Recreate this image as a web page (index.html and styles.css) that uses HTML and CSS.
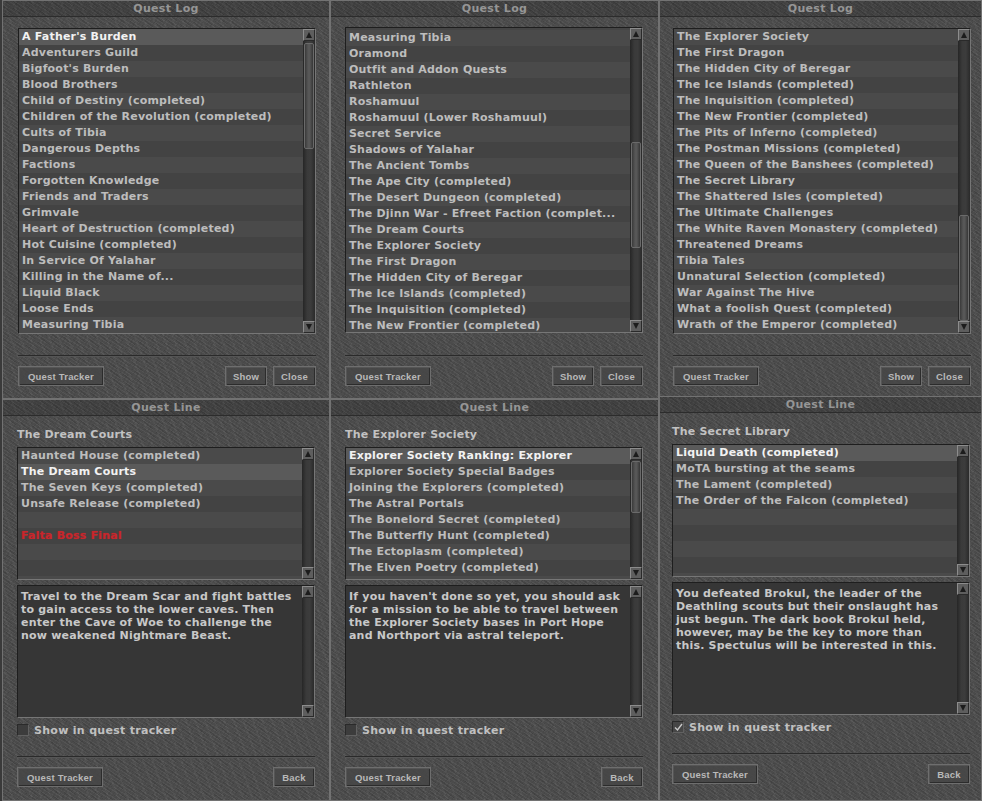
FILE: index.html
```html
<!DOCTYPE html>
<html>
<head>
<meta charset="utf-8">
<link rel="stylesheet" href="styles.css">
</head>
<body>
<div class="grid">

  <!-- Top left -->
  <section class="panel p1">
    <div class="title">Quest Log</div>
    <div class="body pad-15 top">
      <div class="list tall">
        <div class="rows">
          <div class="row sel">A Father's Burden</div>
          <div class="row">Adventurers Guild</div>
          <div class="row">Bigfoot's Burden</div>
          <div class="row">Blood Brothers</div>
          <div class="row">Child of Destiny (completed)</div>
          <div class="row">Children of the Revolution (completed)</div>
          <div class="row">Cults of Tibia</div>
          <div class="row">Dangerous Depths</div>
          <div class="row">Factions</div>
          <div class="row">Forgotten Knowledge</div>
          <div class="row">Friends and Traders</div>
          <div class="row">Grimvale</div>
          <div class="row">Heart of Destruction (completed)</div>
          <div class="row">Hot Cuisine (completed)</div>
          <div class="row">In Service Of Yalahar</div>
          <div class="row">Killing in the Name of...</div>
          <div class="row">Liquid Black</div>
          <div class="row">Loose Ends</div>
          <div class="row">Measuring Tibia</div>
        </div>
        <div class="sb">
          <div class="sb-btn up"></div>
          <div class="sb-track"><div class="thumb" style="margin-top:2px"></div></div>
          <div class="sb-btn down"></div>
        </div>
      </div>
      <div class="sep sep-top"></div>
      <div class="buttons">
        <div class="btn w-qt">Quest Tracker</div>
        <div class="btn w-42 push">Show</div>
        <div class="btn w-43">Close</div>
      </div>
    </div>
  </section>

  <!-- Top middle -->
  <section class="panel p2">
    <div class="title">Quest Log</div>
    <div class="body pad-14 top">
      <div class="list tall up1">
        <div class="rows offset">
          <div class="row">Measuring Tibia</div>
          <div class="row">Oramond</div>
          <div class="row">Outfit and Addon Quests</div>
          <div class="row">Rathleton</div>
          <div class="row">Roshamuul</div>
          <div class="row">Roshamuul (Lower Roshamuul)</div>
          <div class="row">Secret Service</div>
          <div class="row">Shadows of Yalahar</div>
          <div class="row">The Ancient Tombs</div>
          <div class="row">The Ape City (completed)</div>
          <div class="row">The Desert Dungeon (completed)</div>
          <div class="row">The Djinn War - Efreet Faction (complet...</div>
          <div class="row">The Dream Courts</div>
          <div class="row">The Explorer Society</div>
          <div class="row">The First Dragon</div>
          <div class="row">The Hidden City of Beregar</div>
          <div class="row">The Ice Islands (completed)</div>
          <div class="row">The Inquisition (completed)</div>
          <div class="row">The New Frontier (completed)</div>
        </div>
        <div class="sb">
          <div class="sb-btn up"></div>
          <div class="sb-track"><div class="thumb" style="margin-top:102px"></div></div>
          <div class="sb-btn down"></div>
        </div>
      </div>
      <div class="sep sep-top"></div>
      <div class="buttons">
        <div class="btn w-qt">Quest Tracker</div>
        <div class="btn w-42 push">Show</div>
        <div class="btn w-43">Close</div>
      </div>
    </div>
  </section>

  <!-- Top right -->
  <section class="panel p3">
    <div class="title">Quest Log</div>
    <div class="body pad-13 top">
      <div class="list tall">
        <div class="rows">
          <div class="row">The Explorer Society</div>
          <div class="row">The First Dragon</div>
          <div class="row">The Hidden City of Beregar</div>
          <div class="row">The Ice Islands (completed)</div>
          <div class="row">The Inquisition (completed)</div>
          <div class="row">The New Frontier (completed)</div>
          <div class="row">The Pits of Inferno (completed)</div>
          <div class="row">The Postman Missions (completed)</div>
          <div class="row">The Queen of the Banshees (completed)</div>
          <div class="row">The Secret Library</div>
          <div class="row">The Shattered Isles (completed)</div>
          <div class="row">The Ultimate Challenges</div>
          <div class="row">The White Raven Monastery (completed)</div>
          <div class="row">Threatened Dreams</div>
          <div class="row">Tibia Tales</div>
          <div class="row">Unnatural Selection (completed)</div>
          <div class="row">War Against The Hive</div>
          <div class="row">What a foolish Quest (completed)</div>
          <div class="row">Wrath of the Emperor (completed)</div>
        </div>
        <div class="sb">
          <div class="sb-btn up"></div>
          <div class="sb-track"><div class="thumb" style="margin-top:174px"></div></div>
          <div class="sb-btn down"></div>
        </div>
      </div>
      <div class="sep sep-top"></div>
      <div class="buttons">
        <div class="btn w-qt">Quest Tracker</div>
        <div class="btn w-42 push">Show</div>
        <div class="btn w-43">Close</div>
      </div>
    </div>
  </section>

  <!-- Bottom left -->
  <section class="panel p4">
    <div class="title">Quest Line</div>
    <div class="body pad-14">
      <div class="qname">The Dream Courts</div>
      <div class="list short">
        <div class="rows">
          <div class="row">Haunted House (completed)</div>
          <div class="row sel">The Dream Courts</div>
          <div class="row">The Seven Keys (completed)</div>
          <div class="row">Unsafe Release (completed)</div>
          <div class="row"></div>
          <div class="row red">Falta Boss Final</div>
          <div class="row"></div>
          <div class="row"></div>
          <div class="row"></div>
        </div>
        <div class="sb">
          <div class="sb-btn up"></div>
          <div class="sb-track"></div>
          <div class="sb-btn down"></div>
        </div>
      </div>
      <div class="desc">
        <div class="desc-text">Travel to the Dream Scar and fight battles<br>to gain access to the lower caves. Then<br>enter the Cave of Woe to challenge the<br>now weakened Nightmare Beast.</div>
        <div class="sb">
          <div class="sb-btn up"></div>
          <div class="sb-track"></div>
          <div class="sb-btn down"></div>
        </div>
      </div>
      <label class="check"><span class="box"></span>Show in quest tracker</label>
      <div class="sep sep-bottom"></div>
      <div class="buttons">
        <div class="btn w-qt">Quest Tracker</div>
        <div class="btn w-42 push">Back</div>
      </div>
    </div>
  </section>

  <!-- Bottom middle -->
  <section class="panel p5">
    <div class="title">Quest Line</div>
    <div class="body pad-14">
      <div class="qname">The Explorer Society</div>
      <div class="list short">
        <div class="rows">
          <div class="row sel">Explorer Society Ranking: Explorer</div>
          <div class="row">Explorer Society Special Badges</div>
          <div class="row">Joining the Explorers (completed)</div>
          <div class="row">The Astral Portals</div>
          <div class="row">The Bonelord Secret (completed)</div>
          <div class="row">The Butterfly Hunt (completed)</div>
          <div class="row">The Ectoplasm (completed)</div>
          <div class="row">The Elven Poetry (completed)</div>
          <div class="row">The Frozen Trench (completed)</div>
        </div>
        <div class="sb">
          <div class="sb-btn up"></div>
          <div class="sb-track"><div class="thumb small" style="margin-top:1px"></div></div>
          <div class="sb-btn down"></div>
        </div>
      </div>
      <div class="desc">
        <div class="desc-text">If you haven't done so yet, you should ask<br>for a mission to be able to travel between<br>the Explorer Society bases in Port Hope<br>and Northport via astral teleport.</div>
        <div class="sb">
          <div class="sb-btn up"></div>
          <div class="sb-track"></div>
          <div class="sb-btn down"></div>
        </div>
      </div>
      <label class="check"><span class="box"></span>Show in quest tracker</label>
      <div class="sep sep-bottom"></div>
      <div class="buttons">
        <div class="btn w-qt">Quest Tracker</div>
        <div class="btn w-42 push">Back</div>
      </div>
    </div>
  </section>

  <!-- Bottom right -->
  <section class="panel p6">
    <div class="title">Quest Line</div>
    <div class="body pad-12">
      <div class="qname">The Secret Library</div>
      <div class="list short">
        <div class="rows">
          <div class="row sel">Liquid Death (completed)</div>
          <div class="row">MoTA bursting at the seams</div>
          <div class="row">The Lament (completed)</div>
          <div class="row">The Order of the Falcon (completed)</div>
          <div class="row"></div>
          <div class="row"></div>
          <div class="row"></div>
          <div class="row"></div>
          <div class="row"></div>
        </div>
        <div class="sb">
          <div class="sb-btn up"></div>
          <div class="sb-track"></div>
          <div class="sb-btn down"></div>
        </div>
      </div>
      <div class="desc">
        <div class="desc-text">You defeated Brokul, the leader of the<br>Deathling scouts but their onslaught has<br>just begun. The dark book Brokul held,<br>however, may be the key to more than<br>this. Spectulus will be interested in this.</div>
        <div class="sb">
          <div class="sb-btn up"></div>
          <div class="sb-track"></div>
          <div class="sb-btn down"></div>
        </div>
      </div>
      <label class="check"><span class="box checked"><svg width="9" height="9" viewBox="0 0 9 9"><path d="M1 4.5 L3.5 7 L8 1" fill="none" stroke="#c8c8c8" stroke-width="1.4"/></svg></span>Show in quest tracker</label>
      <div class="sep sep-bottom"></div>
      <div class="buttons">
        <div class="btn w-qt">Quest Tracker</div>
        <div class="btn w-42 push">Back</div>
      </div>
    </div>
  </section>

</div>
</body>
</html>
```

FILE: styles.css
```css
html, body {
  margin: 0;
  padding: 0;
}
body {
  width: 982px;
  height: 801px;
  overflow: hidden;
  background: #3a3a3a;
  font-family: "DejaVu Sans", Verdana, sans-serif;
}

.grid {
  display: grid;
  grid-template-columns: 330px 329px 323px;
  grid-template-rows: 399px 402px;
}

.panel {
  box-sizing: border-box;
  border: 1px solid #727272;
  background-color: #4b4b4b;
  background-image:
    repeating-linear-gradient(32deg, rgba(255,255,255,0.05) 0 1px, rgba(255,255,255,0) 1px 3px),
    repeating-linear-gradient(40deg, rgba(0,0,0,0.09) 0 1px, rgba(0,0,0,0) 1px 5px),
    repeating-linear-gradient(125deg, rgba(0,0,0,0.05) 0 1px, rgba(0,0,0,0) 1px 4px),
    repeating-linear-gradient(70deg, rgba(255,255,255,0.03) 0 2px, rgba(255,255,255,0) 2px 9px);
  display: flex;
  flex-direction: column;
  min-height: 0;
}
.p1, .p4 { margin-left: 2px; }
.p6 { margin-top: -3px; }

.title {
  height: 15px;
  line-height: 15px;
  text-align: center;
  font-size: 11px;
  font-weight: bold;
  color: #959595;
  background: rgba(0,0,0,0.14);
  border-bottom: 1px solid #2c2c2c;
  letter-spacing: 0.3px;
}

.body {
  display: flex;
  flex-direction: column;
  width: 298px;
}
.body.top { padding-top: 11px; }
.pad-15 { padding-left: 15px; }
.pad-14 { padding-left: 14px; }
.pad-13 { padding-left: 13px; }
.pad-12 { padding-left: 12px; }

.list {
  display: flex;
  width: 298px;
  box-sizing: border-box;
  border-top: 1px solid #1e1e1e;
  border-left: 1px solid #1e1e1e;
  border-right: 1px solid #767676;
  border-bottom: 1px solid #767676;
  background: #454545;
}
.list.tall { height: 306px; }
.list.up1 { margin-top: -1px; margin-bottom: 1px; }
.list.short { height: 133px; margin-top: 6px; }

.rows {
  flex: 1;
  overflow: hidden;
  min-width: 0;
}
.rows.offset { padding-top: 2px; }

.row {
  height: 16px;
  line-height: 16px;
  padding-left: 3px;
  font-size: 11px;
  font-weight: bold;
  letter-spacing: 0.2px;
  color: #bdbdbd;
  white-space: nowrap;
  overflow: hidden;
  background: #4a4a4a;
}
.row:nth-child(even) { background: #434343; }
.row.sel { background: #5a5a5a; color: #f2f2f2; }
.row.red { color: #c8262c; text-shadow: 0 0 1px rgba(200,38,44,0.6); }

.sb {
  width: 12px;
  flex: none;
  display: flex;
  flex-direction: column;
  background: linear-gradient(to right, #262626 0, #3a3a3a 35%, #3c3c3c 65%, #2a2a2a 100%);
}
.sb-btn {
  height: 12px;
  flex: none;
  box-sizing: border-box;
  background: #5e5e5e;
  border-top: 1px solid #8c8c8c;
  border-left: 1px solid #8c8c8c;
  border-right: 1px solid #2a2a2a;
  border-bottom: 1px solid #2a2a2a;
  display: flex;
  align-items: center;
  justify-content: center;
}
.sb-btn::after {
  content: "";
  width: 0;
  height: 0;
  border-left: 3px solid transparent;
  border-right: 3px solid transparent;
}
.sb-btn.up::after { border-bottom: 6px solid #1c1c1c; }
.sb-btn.down::after { border-top: 6px solid #1c1c1c; }
.sb-track { flex: 1; }
.thumb {
  height: 106px;
  margin-left: 1px;
  margin-right: 1px;
  box-sizing: border-box;
  border: 1px solid #6a6a6a;
  border-radius: 2px;
  background: linear-gradient(to right, #3a3a3a 0, #575757 40%, #575757 60%, #363636 100%);
}
.thumb.small { height: 52px; }

.qname {
  margin-top: 13px;
  height: 12px;
  line-height: 12px;
  font-size: 11px;
  font-weight: bold;
  letter-spacing: 0.2px;
  color: #c2c2c2;
}

.desc {
  display: flex;
  width: 298px;
  height: 133px;
  margin-top: 5px;
  box-sizing: border-box;
  background: #363636;
  border-top: 1px solid #1e1e1e;
  border-left: 1px solid #1e1e1e;
  border-right: 1px solid #767676;
  border-bottom: 1px solid #767676;
}
.desc-text {
  flex: 1;
  min-width: 0;
  padding: 4px 0 0 3px;
  font-size: 11px;
  line-height: 13px;
  font-weight: bold;
  letter-spacing: 0.2px;
  color: #c8c8c8;
  white-space: nowrap;
  overflow: hidden;
}

.check {
  display: flex;
  align-items: center;
  gap: 5px;
  margin-top: 6px;
  height: 12px;
  font-size: 11px;
  font-weight: bold;
  letter-spacing: 0.3px;
  color: #c0c0c0;
}
.box {
  width: 12px;
  height: 12px;
  box-sizing: border-box;
  background: #3c3c3c;
  border-top: 1px solid #2a2a2a;
  border-left: 1px solid #2a2a2a;
  border-right: 1px solid #616161;
  border-bottom: 1px solid #616161;
  display: flex;
  align-items: center;
  justify-content: center;
}
.box.checked { background: #464646; }

.sep {
  border-top: 1px solid #2a2a2a;
  border-bottom: 1px solid #555555;
}
.sep-top { margin-top: 21px; }
.sep-bottom { margin-top: 20px; }

.buttons {
  display: flex;
  gap: 6px;
  margin-top: 9px;
}
.btn {
  height: 20px;
  box-sizing: border-box;
  border: 1px solid #6e6e6e;
  box-shadow: inset 1px 1px 0 #555, inset -1px -1px 0 #2c2c2c;
  background: rgba(70,70,70,0.85);
  font-family: "Liberation Sans", Arial, sans-serif;
  font-weight: bold;
  font-size: 9.5px;
  color: #b9b9b9;
  display: flex;
  align-items: center;
  justify-content: center;
  letter-spacing: 0.2px;
}
.btn.push { margin-left: auto; }
.w-qt { width: 86px; }
.w-42 { width: 42px; }
.w-43 { width: 43px; }
```
